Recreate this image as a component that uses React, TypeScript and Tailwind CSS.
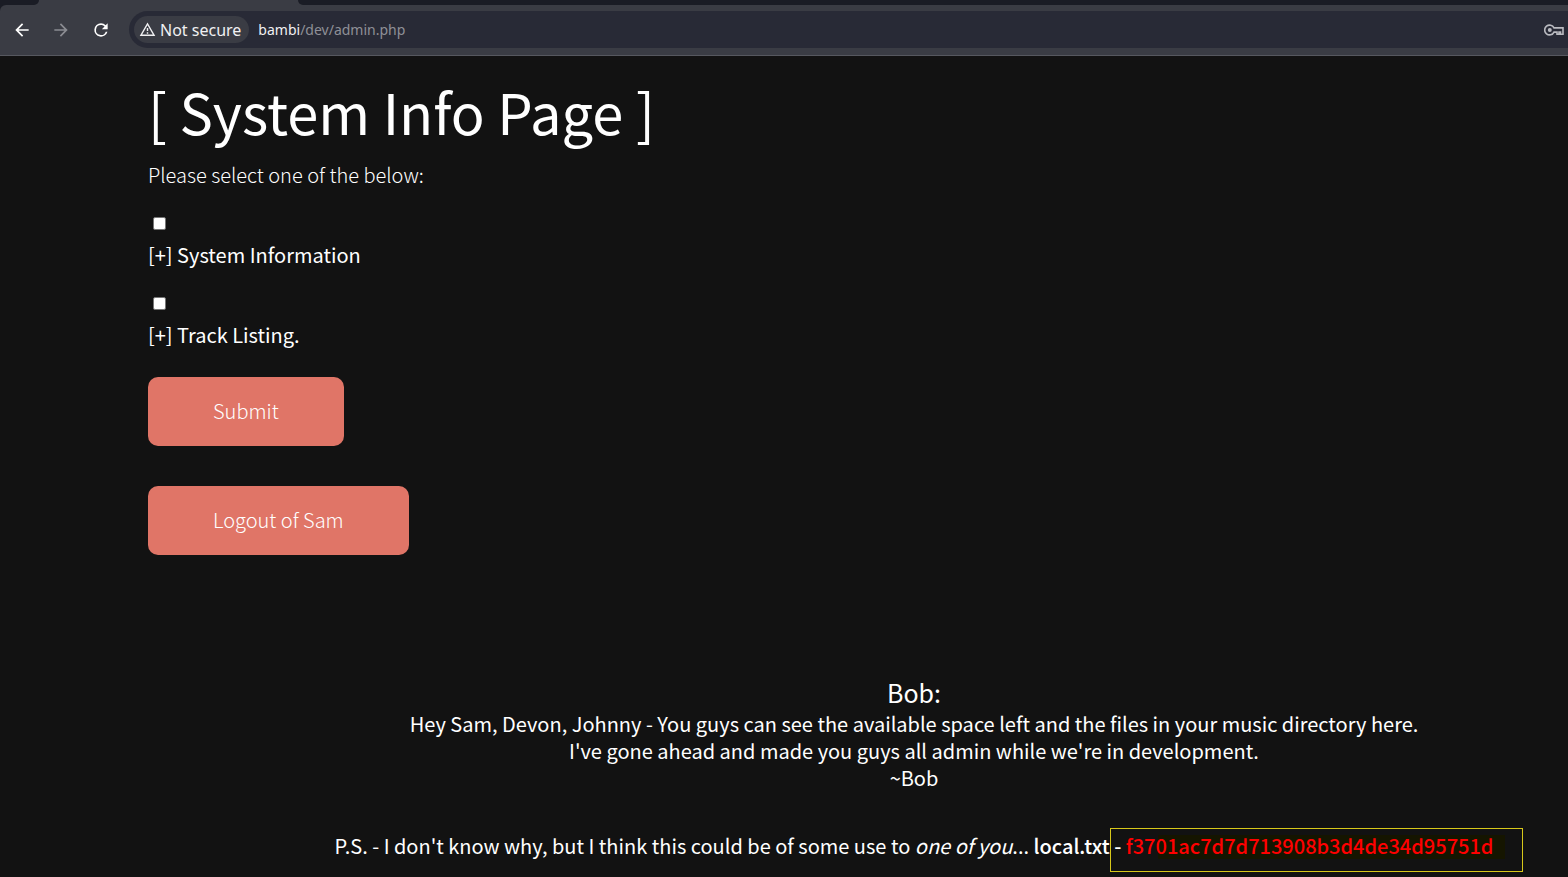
import React from "react";

const options = [
  { id: "system", label: "[+] System Information" },
  { id: "tracks", label: "[+] Track Listing." },
];

function BrowserBar() {
  return (
    <header className="bg-[#1a1c25] font-['Noto_Sans',sans-serif]">
      <div className="flex h-[5px] bg-[#3a3c44]">
        <div className="w-[39px] rounded-br-lg bg-[#1a1c25]" />
        <div className="w-[259px]" />
        <div className="grow rounded-bl-lg bg-[#1a1c25]" />
      </div>
      <nav className="flex h-[51px] items-center rounded-tl-md border-b border-[#56585f] bg-[#3a3c44] pb-px pl-3">
        <button type="button" aria-label="Back" className="flex size-5 items-center justify-center text-white">
          <svg viewBox="0 0 24 24" className="size-5" fill="currentColor">
            <path d="M20 11H7.83l5.59-5.59L12 4l-8 8 8 8 1.41-1.41L7.83 13H20v-2z" />
          </svg>
        </button>
        <button type="button" aria-label="Forward" className="ml-[19px] flex size-5 items-center justify-center text-[#8b8c92]">
          <svg viewBox="0 0 24 24" className="size-5" fill="currentColor">
            <path d="M4 13h12.17l-5.59 5.59L12 20l8-8-8-8-1.41 1.41L16.17 11H4v2z" />
          </svg>
        </button>
        <button type="button" aria-label="Reload" className="ml-5 flex size-5 items-center justify-center text-white">
          <svg viewBox="0 0 24 24" className="size-5" fill="currentColor">
            <path d="M17.65 6.35A7.96 7.96 0 0 0 12 4a8 8 0 1 0 7.73 10h-2.08A6 6 0 1 1 12 6c1.66 0 3.14.69 4.22 1.78L13 11h7V4l-2.35 2.35z" />
          </svg>
        </button>
        <div className="ml-[18px] flex h-[37px] grow items-center rounded-l-full bg-[#282a36] pl-[5px]">
          <button type="button" className="flex h-[27px] shrink-0 items-center gap-1 rounded-full bg-[#3a3c44] pr-2 pl-[5px] text-[16px] text-[#f0f0f2]">
            <svg viewBox="0 0 24 24" className="size-[17px]" fill="currentColor" aria-hidden="true">
              <path d="M12 5.99 19.53 19H4.47L12 5.99M12 2 1 21h22L12 2zm1 14h-2v2h2v-2zm0-6h-2v4h2v-4z" />
            </svg>
            Not secure
          </button>
          <a href="#" className="ml-[9px] text-[14px] text-[#8f9097]">
            <span className="text-[#f0f0f2]">bambi</span>/dev/admin.php
          </a>
          <button type="button" aria-label="Saved passwords" className="mr-1 ml-auto text-[#b9bac0]">
            <svg viewBox="0 0 20 12" className="h-3 w-5" fill="none" stroke="currentColor" aria-hidden="true">
              <path d="M10 3.9A4.9 4.9 0 1 0 10 8.1H13V10.2H15V8.1H16.5V10.2H19V3.9Z" strokeWidth="1.6" />
              <circle cx="5.8" cy="6" r="2" fill="currentColor" stroke="none" />
            </svg>
          </button>
        </div>
      </nav>
    </header>
  );
}

export default function App() {
  return (
    <div className="min-h-screen overflow-hidden bg-[#121212] text-white">
      <BrowserBar />
      <main className="font-['Noto_Sans_CJK_SC',sans-serif] text-[20px] leading-[27px]">
        <form className="pt-5 pl-[148px]" onSubmit={(e) => e.preventDefault()}>
          <h1 className="text-[56px] leading-[70px]">[ System Info Page ]</h1>
          <p className="mt-[15px] font-light">Please select one of the below:</p>
          {options.map((o) => (
            <div key={o.id} className="mt-[29px] flex flex-col">
              <input
                id={o.id}
                type="checkbox"
                className="ml-[5px] size-[13px] appearance-none rounded-[2px] border border-[#767676] bg-white checked:bg-[#0075ff]"
              />
              <label htmlFor={o.id} className="mt-[11px] self-start">
                {o.label}
              </label>
            </div>
          ))}
          <button type="submit" className="mt-[29px] block h-[69px] rounded-[10px] bg-[#e07567] px-[65px] pb-0.5 font-light">
            Submit
          </button>
          <button type="button" className="mt-10 block h-[69px] rounded-[10px] bg-[#e07567] px-[65px] pb-0.5 font-light">
            Logout of Sam
          </button>
        </form>
        <section className="mt-[119px] pl-[260px] text-center">
          <h2 className="text-[25px] leading-9">Bob:</h2>
          <p>Hey Sam, Devon, Johnny - You guys can see the available space left and the files in your music directory here.</p>
          <p>I've gone ahead and made you guys all admin while we're in development.</p>
          <p>~Bob</p>
          <p className="mt-[41px] whitespace-nowrap">
            P.S. - I don't know why, but I think this could be of some use to <em>one of you</em>...{" "}
            <strong className="font-medium">
              local.txt{" "}
              <span className="relative">
                <span className="absolute top-1 -right-3 left-11 h-6 bg-[#151500]" />
                <span className="relative">
                  - <span className="text-[#ff0000]">f3701ac7d7d713908b3d4de34d95751d</span>
                </span>
                <span className="absolute -top-[3px] -right-[30px] -left-1 h-11 border border-[#d8c81a]" />
              </span>
            </strong>
          </p>
        </section>
      </main>
    </div>
  );
}
